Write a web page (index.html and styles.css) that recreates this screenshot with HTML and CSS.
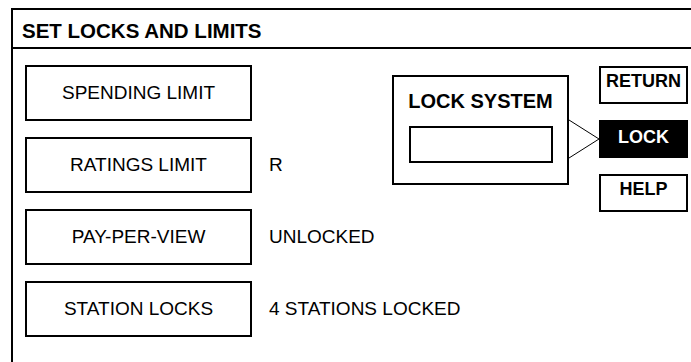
FILE: index.html
```html
<!DOCTYPE html>
<html lang="en">
  <head>
    <meta charset="UTF-8" />
    <meta name="viewport" content="width=device-width, initial-scale=1.0" />
    <title>Set Locks and Limits</title>

    <link rel="stylesheet" href="styles.css">

  </head>
  <body>
    <div class="screen">
      <div class="title-bar">SET LOCKS AND LIMITS</div>
      <div class="content">
        <div class="menu">
          <div class="menu-row">
            <div class="menu-btn">SPENDING LIMIT</div>
            <span class="menu-value"></span>
          </div>
          <div class="menu-row">
            <div class="menu-btn">RATINGS LIMIT</div>
            <span class="menu-value">R</span>
          </div>
          <div class="menu-row">
            <div class="menu-btn">PAY-PER-VIEW</div>
            <span class="menu-value">UNLOCKED</span>
          </div>
          <div class="menu-row">
            <div class="menu-btn">STATION LOCKS</div>
            <span class="menu-value">4 STATIONS LOCKED</span>
          </div>
        </div>

        <div class="lock-panel">
          <div class="lock-box">
            <div class="lock-title">LOCK SYSTEM</div>
            <div class="code-field"></div>
          </div>
          <!-- callout pointing at the LOCK button -->
          <svg class="pointer" width="30" height="110" viewBox="0 0 30 110">
            <path d="M0 45 L30 64 L0 83" fill="none" stroke="#000" stroke-width="1" />
          </svg>
          <div class="side-buttons">
            <div class="side-btn">RETURN</div>
            <div class="side-btn active">LOCK</div>
            <div class="side-btn">HELP</div>
          </div>
        </div>
      </div>
    </div>
  </body>
</html>
```

FILE: styles.css
```css
body {
  font-family: "Liberation Sans", Arial, sans-serif;
  background-color: #fff;
  color: #000;
  margin: 0;
  overflow: hidden;
}
.screen {
  margin: 8px 0 0 11px;
  width: 720px;
  height: 400px;
  border-left: 2px solid #000;
  border-top: 2px solid #000;
}
.title-bar {
  height: 39px;
  line-height: 36px;
  padding: 3px 0 0 9px;
  box-sizing: border-box;
  border-bottom: 2px solid #000;
  font-size: 20.5px;
  font-weight: bold;
  white-space: nowrap;
}
.content {
  display: flex;
  align-items: flex-start;
  padding: 16px 0 0 12px;
}
.menu {
  width: 367px;
  display: flex;
  flex-direction: column;
  gap: 16px;
}
.menu-row {
  display: flex;
  align-items: center;
  gap: 17px;
  white-space: nowrap;
}
.menu-btn {
  width: 227px;
  height: 56px;
  box-sizing: border-box;
  border: 2px solid #000;
  display: flex;
  align-items: center;
  justify-content: center;
  font-size: 19px;
  flex-shrink: 0;
}
.menu-value {
  font-size: 19px;
}
.lock-panel {
  display: flex;
  align-items: flex-start;
}
.lock-box {
  margin-top: 10px;
  width: 177px;
  height: 110px;
  box-sizing: border-box;
  border: 2px solid #000;
  display: flex;
  flex-direction: column;
  align-items: center;
  padding-top: 12px;
}
.lock-title {
  font-size: 20px;
  font-weight: bold;
  line-height: 24px;
  white-space: nowrap;
}
.code-field {
  margin-top: 13px;
  width: 144px;
  height: 37px;
  box-sizing: border-box;
  border: 2px solid #000;
}
.pointer {
  display: block;
  margin-top: 10px;
}
.side-buttons {
  margin-top: 1px;
  display: flex;
  flex-direction: column;
  gap: 16px;
}
.side-btn {
  width: 89px;
  height: 38px;
  box-sizing: border-box;
  border: 2px solid #000;
  padding-top: 3px;
  text-align: center;
  font-size: 18px;
  font-weight: bold;
  line-height: 20px;
}
.side-btn.active {
  background-color: #000;
  color: #fff;
  padding-top: 5px;
}
```
